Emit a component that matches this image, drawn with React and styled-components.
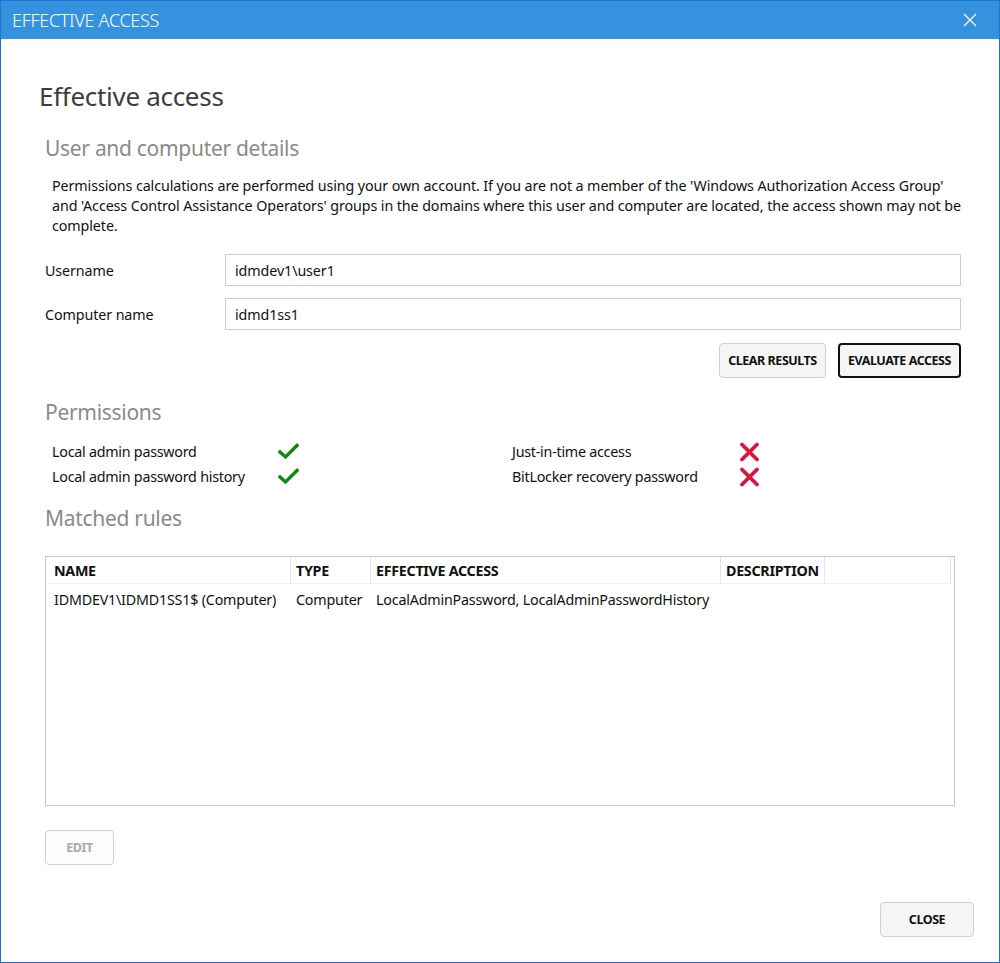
import React from 'react';
import styled, { createGlobalStyle } from 'styled-components';

const Global = createGlobalStyle`
  html, body { margin: 0; padding: 0; background: #fff; }
  body { font-family: "Noto Sans", "Open Sans", sans-serif; color: #111; }
  * { box-sizing: border-box; }
`;

const Window = styled.div`
  width: 1000px;
  height: 963px;
  border: 1px solid #1b78cf;
  border-top: none;
  display: flex;
  flex-direction: column;
  background: #fff;
`;

const TitleBar = styled.div`
  height: 39px;
  background: #3592de;
  border-top: 1px solid #1b78cf;
  display: flex;
  align-items: center;
  justify-content: space-between;
  padding: 0 22px 0 11px;
  color: #fff;
  font-size: 18px;
  font-weight: 300;
  letter-spacing: -0.3px;
`;

const Body = styled.div`
  flex: 1;
  display: flex;
  flex-direction: column;
  padding: 39px 25px 25px 38px;
`;

const PageTitle = styled.h1`
  margin: 0 0 19px 0;
  font-size: 26px;
  font-weight: 400;
  color: #3d3d3d;
  letter-spacing: -0.3px;
`;

const Section = styled.div`
  padding-left: 6px;
  padding-right: 13px;
  display: flex;
  flex-direction: column;
`;

const SectionTitle = styled.h2`
  margin: 0;
  font-size: 21px;
  font-weight: 400;
  color: #8a8a8a;
  letter-spacing: -0.3px;
  height: 31px;
  line-height: 31px;
`;

const Note = styled.p`
  margin: 12px -8px 18px 7px;
  font-size: 14.3px;
  line-height: 20px;
  color: #111;
  letter-spacing: -0.1px;
`;

const FieldRow = styled.div`
  display: grid;
  grid-template-columns: 180px 1fr;
  align-items: center;
  margin-bottom: 12px;
  font-size: 14.3px;
  letter-spacing: -0.1px;
`;

const Input = styled.div`
  height: 32px;
  border: 1px solid #cfcfcf;
  display: flex;
  align-items: center;
  padding-left: 9px;
  font-size: 14.3px;
`;

const ButtonRow = styled.div`
  display: flex;
  justify-content: flex-end;
  gap: 12px;
  margin: 1px 0 19px;
`;

const Button = styled.button`
  height: 35px;
  padding: 0;
  background: ${p => (p.$disabled ? '#fcfcfc' : '#f5f5f5')};
  border: ${p => (p.$primary ? '2px solid #111' : '1px solid #d0d0d0')};
  border-radius: 4px;
  font-family: inherit;
  font-size: 12.5px;
  font-weight: 700;
  white-space: nowrap;
  color: ${p => (p.$disabled ? '#a8a8a8' : '#111')};
  letter-spacing: -0.45px;
  width: ${p => p.$w}px;
`;

const PermGrid = styled.div`
  display: grid;
  grid-template-columns: 226px 234px 227px 1fr;
  grid-auto-rows: 25px;
  padding-left: 7px;
  margin: 11px 0 14px;
  align-items: center;
  font-size: 14.3px;
  letter-spacing: -0.25px;
`;

const Table = styled.div`
  margin-top: 22px;
  height: 250px;
  border: 1px solid #c8c8c8;
  width: 910px;
  padding-right: 3px;
`;

const HeadRow = styled.div`
  display: grid;
  grid-template-columns: 245px 80px 350px 104px 126px;
  height: 27px;
  border-bottom: 1px solid #f0f0f0;
`;

const HeadCell = styled.div`
  font-size: 14.3px;
  font-weight: 700;
  padding-left: ${p => (p.$first ? 8 : 5)}px;
  display: flex;
  align-items: center;
  border-right: 1px solid #e4e4e4;
  letter-spacing: -0.3px;
`;

const DataRow = styled.div`
  display: grid;
  grid-template-columns: 245px 80px 350px 104px 126px;
  height: 30px;
  align-items: center;
  font-size: 14.3px;
  letter-spacing: -0.2px;
`;

const Cell = styled.div`
  padding-left: ${p => (p.$first ? 8 : 5)}px;
  white-space: nowrap;
`;

const EditRow = styled.div`
  margin-top: 24px;
`;

const Footer = styled.div`
  margin-top: auto;
  display: flex;
  justify-content: flex-end;
`;

const Check = () => (
  <svg width="21" height="17" viewBox="0 0 21 17">
    <path d="M2 9 L7.5 14 L19 2.5" fill="none" stroke="#108a10" strokeWidth="3.4" strokeLinecap="square" />
  </svg>
);

const Cross = () => (
  <svg width="21" height="20" viewBox="0 0 21 20">
    <path d="M3 2.5 L18 17.5 M18 2.5 L3 17.5" fill="none" stroke="#dc143c" strokeWidth="3.8" strokeLinecap="round" />
  </svg>
);

const CloseGlyph = () => (
  <svg width="14" height="14" viewBox="0 0 14 14">
    <path d="M1 1 L13 13 M13 1 L1 13" stroke="#fff" strokeWidth="1.2" />
  </svg>
);

export default function App() {
  return (
    <Window>
      <Global />
      <TitleBar>
        <span>EFFECTIVE ACCESS</span>
        <CloseGlyph />
      </TitleBar>
      <Body>
        <PageTitle>Effective access</PageTitle>
        <Section>
          <SectionTitle>User and computer details</SectionTitle>
          <Note>
            Permissions calculations are performed using your own account. If you are not a member of the 'Windows Authorization Access Group' and 'Access Control Assistance Operators' groups in the domains where this user and computer are located, the access shown may not be complete.
          </Note>
          <FieldRow>
            <span>Username</span>
            <Input>idmdev1\user1</Input>
          </FieldRow>
          <FieldRow>
            <span>Computer name</span>
            <Input>idmd1ss1</Input>
          </FieldRow>
          <ButtonRow>
            <Button $w={107}>CLEAR RESULTS</Button>
            <Button $w={123} $primary>EVALUATE ACCESS</Button>
          </ButtonRow>

          <SectionTitle>Permissions</SectionTitle>
          <PermGrid>
            <span>Local admin password</span>
            <Check />
            <span>Just-in-time access</span>
            <Cross />
            <span>Local admin password history</span>
            <Check />
            <span>BitLocker recovery password</span>
            <Cross />
          </PermGrid>

          <SectionTitle>Matched rules</SectionTitle>
          <Table>
            <HeadRow>
              <HeadCell $first>NAME</HeadCell>
              <HeadCell>TYPE</HeadCell>
              <HeadCell>EFFECTIVE ACCESS</HeadCell>
              <HeadCell>DESCRIPTION</HeadCell>
              <HeadCell />
            </HeadRow>
            <DataRow>
              <Cell $first>IDMDEV1\IDMD1SS1$ (Computer)</Cell>
              <Cell>Computer</Cell>
              <Cell>LocalAdminPassword, LocalAdminPasswordHistory</Cell>
              <Cell />
              <Cell />
            </DataRow>
          </Table>
          <EditRow>
            <Button $w={69} $disabled>EDIT</Button>
          </EditRow>
        </Section>
        <Footer>
          <Button $w={94}>CLOSE</Button>
        </Footer>
      </Body>
    </Window>
  );
}
